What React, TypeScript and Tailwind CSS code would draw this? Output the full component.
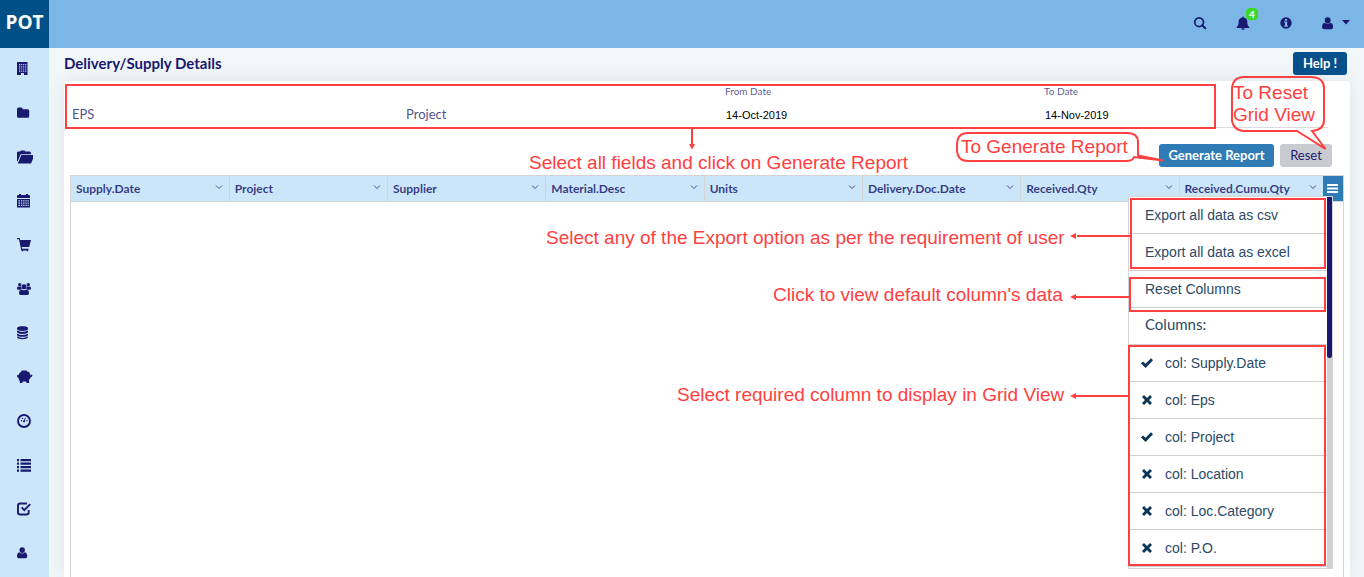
import type { ReactNode } from "react";

const NAVY = "#191970";

function Icon({ children, size = 16, label }: { children: ReactNode; size?: number; label?: string }) {
  return (
    <svg
      width={size}
      height={size}
      viewBox="0 0 16 16"
      fill="currentColor"
      role={label ? "img" : undefined}
      aria-label={label}
      aria-hidden={label ? undefined : true}
      className="block shrink-0"
    >
      {children}
    </svg>
  );
}

const UserShape = () => (
  <path d="M5.2 2.2a2.8 2.8 0 0 0-2.7 2.9C2.500 6.900 3.700 8 5.200 8S7.900 6.900 7.900 5.100A2.800 2.800 0 0 0 5.200 2.200zM2.500 7.200C.9 7.400 0 9 0 11.200 0 12.700.9 13.200 2 13.200h6.200c1.200 0 2-.6 2-2C10.200 9 9.400 7.400 7.800 7.200 7 8 6.200 8.400 5.200 8.400S3.300 8 2.500 7.200z" />
);

const sidebar: { label: string; icon: ReactNode }[] = [
  {
    label: "Enterprise",
    icon: (
      <path
        fillRule="evenodd"
        d="M0 1h10.500v13H7v-2H4v2H0zM2 3v1.200h1.200V3zm2.200 0v1.200h1V3zm2 0v1.200h1V3zm2 0v1.200h1.100V3zM2 5.200v1.200h1.200V5.200zm2.200 0v1.200h1V5.200zm2 0v1.200h1V5.200zm2 0v1.200h1.100V5.200zM2 7.400v1.200h1.200V7.400zm2.200 0v1.200h1V7.400zm2 0v1.200h1V7.400zm2 0v1.200h1.100V7.400zM2 9.600v1.200h1.200V9.600zm2.200 0v1.200h1V9.600zm2 0v1.200h1V9.600zm2 0v1.200h1.100V9.600z"
      />
    ),
  },
  { label: "Projects", icon: <path d="M0 4a1.500 1.500 0 0 1 1.500-1.500h2.700A1.500 1.500 0 0 1 5.700 4v.2h5A1.500 1.500 0 0 1 12.200 5.700v5.500a1.500 1.500 0 0 1-1.500 1.500H1.500A1.500 1.500 0 0 1 0 11.200z" /> },
  {
    label: "Open files",
    icon: <path d="M0 3.500L.9 2.500h2.300L4 1.500h3.500l.8 1H13l.9 1v1.700H3.600L.8 12 0 12.500zM4.300 6h13.200L14 14.500H.8z" />,
  },
  {
    label: "Calendar",
    icon: (
      <path
        fillRule="evenodd"
        d="M2 1h2v1h5V1h2v1h1.200l.8.800V5H0V2.800L.8 2H2zM0 6h13v8.500H0zm1.500 1.200v1.200h1.500V7.200zm2.500 0v1.200h1.300V7.200zm2.200 0v1.200h1.300V7.200zm2.200 0v1.200h1.300V7.200zm2.200 0v1.200h1.200V7.200zM1.500 9.500v1.200h1.500V9.500zm2.500 0v1.200h1.300V9.500zm2.200 0v1.200h1.300V9.500zm2.200 0v1.200h1.300V9.500zm2.200 0v1.200h1.200V9.500zM1.500 11.800V13h1.500v-1.200zm2.500 0V13h1.300v-1.200zm2.200 0V13h1.300v-1.200zm2.200 0V13h1.300v-1.200zm2.200 0V13h1.200v-1.200z"
      />
    ),
  },
  { label: "Procurement", icon: <path d="M0 1h2.700l.5 2H14l-1.800 7H4.800l.3 1.800H11.500v1.200l-1 1.500-1.200-1H6.500l-1.200 1-1-1L3.800 11 2 2.200H0z" /> },
  {
    label: "Teams",
    icon: (
      <>
        <circle cx="2.700" cy="3.600" r="1.700" />
        <circle cx="11.300" cy="3.600" r="1.700" />
        <circle cx="7" cy="5.800" r="2.500" />
        <path d="M4 5.500H1.200Q0 5.500 0 7.200 0 8.800 1 8.800h2.200Q4 7.800 5 7.700 4.100 6.700 4 5.500zM10 5.500h2.800q1.200 0 1.200 1.700 0 1.600-1 1.600h-2.200Q10 7.800 9 7.700q.9-1 1-2.200zM4.600 8.400Q7 10 9.400 8.400 12 8.700 12 12q0 2-1.600 2H3.600Q2 14 2 12 2 8.700 4.600 8.400z" />
      </>
    ),
  },
  {
    label: "Master data",
    icon: (
      <path d="M0 3.200C0 .7 11 .7 11 3.200v.8C11 6.500 0 6.500 0 4zM0 5.600Q5.500 8.300 11 5.600V7C11 9.500 0 9.500 0 7zM0 8.700q5.500 2.700 11 0v1.200c0 2.500-11 2.500-11 0zM0 11.600q5.500 2.700 11 0v.6c0 2.600-11 2.600-11 0z" />
    ),
  },
  { label: "Budget", icon: <path d="M4.200 2.800Q4 1.600 5.500 1.400h3.500Q10.500 1.500 10.400 2.800L12.300 3l.6 2Q13.600 5.800 13.700 6.500L14.300 5.600l1.200.6-.6 1.600-1.300.4q-.6 1.900-1.700 2.800l.3 3H9.600l-.7-1.600H5.800L5.300 14H3L2.500 11.300Q1.700 10.200 1.300 8.700L-.8 7.200V6.400L1.500 6Q2.300 3.800 4.200 2.800z" /> },
  {
    label: "Dashboard",
    icon: (
      <>
        <circle cx="7" cy="8" r="6" fill="none" stroke="currentColor" strokeWidth="1.900" />
        <circle cx="7" cy="8.300" r="1.100" />
        <path d="M6.800 8l1.300-3.500.8.300-1.200 3.500z" />
        <circle cx="4.500" cy="7.800" r=".7" />
        <circle cx="5.500" cy="5.500" r=".7" />
        <circle cx="10" cy="7.800" r=".7" />
      </>
    ),
  },
  { label: "Lists", icon: <path d="M0 2h2v2.300H0zm3.500 0H14v2.300H3.500zM0 5.500h2v2.300H0zm3.500 0H14v2.300H3.500zM0 9h2v2.300H0zm3.500 0H14v2.300H3.500zM0 12.500h2v2.300H0zm3.500 0H14v2.300H3.500z" /> },
  {
    label: "Tasks",
    icon: (
      <>
        <path d="M11.700 9v2.200a2.300 2.300 0 0 1-2.300 2.300H3.300A2.300 2.300 0 0 1 1 11.200V4.800a2.300 2.300 0 0 1 2.300-2.300H10" fill="none" stroke="currentColor" strokeWidth="1.900" />
        <path d="M4 7l1.300-1.200 2 2L12.600 2.500 13.900 3.800 7.300 10.400z" />
      </>
    ),
  },
  { label: "Account", icon: <UserShape /> },
];

const columns = [
  "Supply.Date",
  "Project",
  "Supplier",
  "Material.Desc",
  "Units",
  "Delivery.Doc.Date",
  "Received.Qty",
  "Received.Cumu.Qty",
];

const columnChoices: [string, boolean][] = [
  ["Supply.Date", true],
  ["Eps", false],
  ["Project", true],
  ["Location", false],
  ["Loc.Category", false],
  ["P.O.", false],
];

function Chevron() {
  return (
    <svg width="8" height="8" viewBox="0 0 8 8" fill="none" stroke={NAVY} strokeOpacity=".75" className="mb-1" aria-hidden="true">
      <path d="M1 2.500l3 3 3-3" />
    </svg>
  );
}

function Check() {
  return (
    <svg width="12" height="12" viewBox="0 0 12 12" fill="#0b3558" aria-hidden="true">
      <path d="M0 6.500l2-2 2.500 2.300L10 1.300l2 1.900L4.600 11z" />
    </svg>
  );
}

function Cross() {
  return (
    <svg width="12" height="12" viewBox="0 0 12 12" fill="#0b3558" aria-hidden="true">
      <path d="M1 3l2-2 3 3 3-3 2 2-3 3 3 3-2 2-3-3-3 3-2-2 3-3z" />
    </svg>
  );
}

function GridMenu() {
  const item = "flex h-[37px] w-full shrink-0 items-center border-b border-[#cfcfcf] pl-4 text-left";
  return (
    <div className="absolute right-[10px] top-5 z-10 flex h-[373px] w-[205px] overflow-hidden border border-[#d4d4d4] bg-white font-['Liberation_Sans',Arial,sans-serif] text-[14px] text-[#2b4a66]">
      <div className="flex flex-1 flex-col">
        <button type="button" className={item}>Export all data as csv</button>
        <button type="button" className={item}>Export all data as excel</button>
        <button type="button" className={item}>Reset Columns</button>
        <div className="flex h-[37px] shrink-0 items-center border-b border-[#cfcfcf] pb-1 pl-4 font-[Lato,sans-serif] text-[15px]">Columns:</div>
        {columnChoices.map(([name, shown]) => (
          <button key={name} type="button" aria-pressed={shown} className="flex h-[37px] w-full shrink-0 items-center gap-3 border-b border-[#cfcfcf] pl-3 text-left">
            {shown ? <Check /> : <Cross />}
            <span>col: {name}</span>
          </button>
        ))}
      </div>
      <div className="w-[5px] bg-[#d0d0d0]">
        <div className="h-[161px] rounded-b-sm bg-[#191970]" />
      </div>
    </div>
  );
}

function Note({ className, children }: { className: string; children: ReactNode }) {
  return (
    <p className={`absolute whitespace-nowrap font-['Liberation_Sans',Arial,sans-serif] text-[19px] leading-[22px] text-[#ff4040] ${className}`}>
      {children}
    </p>
  );
}

function Annotations() {
  return (
    <div className="pointer-events-none absolute left-0 top-0 z-20">
      <svg width="1364" height="577" viewBox="0 0 1364 577" fill="none" stroke="#ff4040" strokeWidth="2" className="block max-w-none" aria-hidden="true">
        <path d="M66 85h1149v43H66zM1131 199h194v69H1131zM1130 278h195v33H1130zM1129 346h196v219H1129z" />
        <path d="M692 129v16M1131 236h-54M1130 297h-54M1130 396h-54" />
        <path d="M689 144h6l-3 5.500zM1076 233v6l-6-3zM1076 294v6l-6-3zM1076 393v6l-6-3z" fill="#ff4040" stroke="none" />
        <path d="M1138 155.500V142q0-9-11-9H968q-11 0-11 12v4q0 12 11 12h158q7 0 8-4l29 3.500z" />
        <path d="M1312 131l13.500 18L1297 131h-54q-9-1-11-10V90q0-13 12-13h68q13 1 12 13v30q0 10-12 11z" />
      </svg>
      <Note className="left-[529px] top-[152px]">Select all fields and click on Generate Report</Note>
      <Note className="left-[961px] top-[136px]">To Generate Report</Note>
      <Note className="left-[1233px] top-[82px]">To Reset<br />Grid View</Note>
      <Note className="left-[546px] top-[227px]">Select any of the Export option as per the requirement of user</Note>
      <Note className="left-[773px] top-[284px]">Click to view default column's data</Note>
      <Note className="left-[677px] top-[384px]">Select required column to display in Grid View</Note>
    </div>
  );
}

export default function App() {
  return (
    <div className="relative flex min-h-screen flex-col overflow-x-hidden bg-[#f1f6f9] font-[Lato,sans-serif] text-[#191970]">
      <header className="flex h-12 bg-[#7cb6e7]">
        <a href="#home" className="flex w-[49px] items-center justify-center bg-[#004f86] pb-1 font-['Open_Sans',sans-serif] text-[19px] font-bold text-white">POT</a>
        <div className="flex flex-1 items-center justify-end gap-[29px] pb-[3px] pr-[14px]">
          <button type="button" aria-label="Search">
            <Icon size={14}>
              <circle cx="7" cy="7" r="5" fill="none" stroke="currentColor" strokeWidth="2" />
              <path d="M10.500 10.500l3.500 3.500" stroke="currentColor" strokeWidth="2.400" strokeLinecap="round" />
            </Icon>
          </button>
          <button type="button" aria-label="Notifications" className="relative">
            <Icon size={14}>
              <path d="M8 0l1 1.700C12 2.300 13 4.500 13 7c0 3 .8 4.400 2.200 5.600v1H.8v-1C2.200 11.400 3 10 3 7c0-2.500 1-4.700 4-5.300zM6 14h4c0 2.500-4 2.500-4 0z" />
            </Icon>
            <span className="absolute -top-2 left-[10px] flex h-3 w-3 items-center justify-center rounded-sm bg-[#3bd926] text-[10px] font-bold leading-none text-white">4</span>
          </button>
          <button type="button" aria-label="Information">
            <Icon size={14}>
              <path fillRule="evenodd" d="M8 1.500a6.500 6.500 0 1 0 0 13 6.500 6.500 0 0 0 0-13zM6.700 3.300h2.600v2H6.700zM5.800 6.300h3.500v4.500h1v1.500H5.800v-1.500h1v-3h-1z" />
            </Icon>
          </button>
          <button type="button" aria-label="Account menu" className="flex items-center gap-2">
            <svg width="12" height="14" viewBox="0 1 11 13" fill="currentColor" aria-hidden="true"><UserShape /></svg>
            <svg width="8" height="5" viewBox="0 0 8 5" fill="currentColor" aria-hidden="true"><path d="M0 0h8L4 4.500z" /></svg>
          </button>
        </div>
      </header>

      <div className="flex flex-1">
        <nav aria-label="Main" className="flex w-[49px] shrink-0 flex-col bg-[#cbe6f9]">
          {sidebar.map(({ label, icon }) => (
            <a key={label} href="#section" aria-label={label} className="flex h-11 items-center pb-[2px] pl-[17px]">
              <Icon>{icon}</Icon>
            </a>
          ))}
        </nav>

        <main className="flex min-w-0 flex-1 flex-col pl-[15px] pr-[14px]">
          <div className="flex h-[33px] items-center justify-between pb-[2px] pr-[3px]">
            <h1 className="text-[15px] font-bold">Delivery/Supply Details</h1>
            <button type="button" className="h-[23px] w-[54px] rounded-[3px] bg-[#08508c] text-[13px] font-bold text-white">Help !</button>
          </div>

          <section className="flex flex-1 flex-col rounded-t-[3px] bg-white pl-[6px] pr-[6px] shadow-[0_0_18px_rgba(60,90,110,0.10)]">
            <form onSubmit={(e) => e.preventDefault()}>
              <div className="mr-4 grid h-[47px] grid-cols-[334fr_319fr_319fr_284fr] border-b border-[#dcdcdc] pl-[2px]">
                <div className="flex items-end pb-[3px]">
                  <input aria-label="EPS" placeholder="EPS" className="w-full bg-transparent text-[13px] outline-none placeholder:text-[#191970]/80" />
                </div>
                <div className="flex items-end pb-[3px]">
                  <input aria-label="Project" placeholder="Project" className="w-full bg-transparent text-[13px] outline-none placeholder:text-[#191970]/80" />
                </div>
                <div className="flex flex-col justify-between pb-1 pt-1">
                  <label htmlFor="from-date" className="text-[10px] leading-3 text-[#191970]/75">From Date</label>
                  <input id="from-date" defaultValue="14-Oct-2019" className="w-full bg-transparent pl-px font-['Liberation_Sans',Arial,sans-serif] text-[11px] leading-4 text-black outline-none" />
                </div>
                <div className="flex flex-col justify-between pb-1 pt-1">
                  <label htmlFor="to-date" className="text-[10px] leading-3 text-[#191970]/75">To Date</label>
                  <input id="to-date" defaultValue="14-Nov-2019" className="w-full bg-transparent pl-px font-['Liberation_Sans',Arial,sans-serif] text-[11px] leading-4 text-black outline-none" />
                </div>
              </div>
              <div className="flex justify-end gap-[6px] pb-2 pr-3 pt-4">
                <button type="submit" className="h-[23px] w-[115px] rounded-[3px] bg-[#2f7bb6] text-[13px] font-bold text-white">Generate Report</button>
                <button type="reset" className="h-[23px] w-[52px] rounded-[3px] bg-[#c9cbd1] text-[13px]">Reset</button>
              </div>
            </form>

            <div className="relative flex flex-1 flex-col border border-b-0 border-[#d4d4d4]">
              <div className="flex h-[26px] border-b border-[#d4d4d4] bg-[#cbe6f9]">
                <div className="min-w-0 flex-1">
                  <table className="h-full w-full table-fixed border-collapse">
                    <colgroup>
                      {columns.map((name, i) => (
                        <col key={name} className={i === columns.length - 1 ? "w-[144px]" : undefined} />
                      ))}
                    </colgroup>
                    <thead>
                      <tr>
                        {columns.map((name) => (
                          <th key={name} scope="col" className="border-r border-[#d4d4d4] p-0 text-left text-[12px] font-bold text-[#191970]/85 last:border-r-0">
                            <div className="flex items-center justify-between pl-[5px] pr-[6px]">
                              <span>{name}</span>
                              <Chevron />
                            </div>
                          </th>
                        ))}
                      </tr>
                    </thead>
                  </table>
                </div>
                <button type="button" aria-label="Grid menu" className="flex w-5 items-center justify-center bg-[#2f7bb6] pr-px">
                  <svg width="11" height="10" viewBox="0 0 11 10" fill="#fff" aria-hidden="true">
                    <path d="M0 0h11v2H0zm0 3.500h11v2H0zM0 7h11v2H0z" />
                  </svg>
                </button>
              </div>
              <GridMenu />
            </div>
          </section>
        </main>
      </div>
      <Annotations />
    </div>
  );
}
